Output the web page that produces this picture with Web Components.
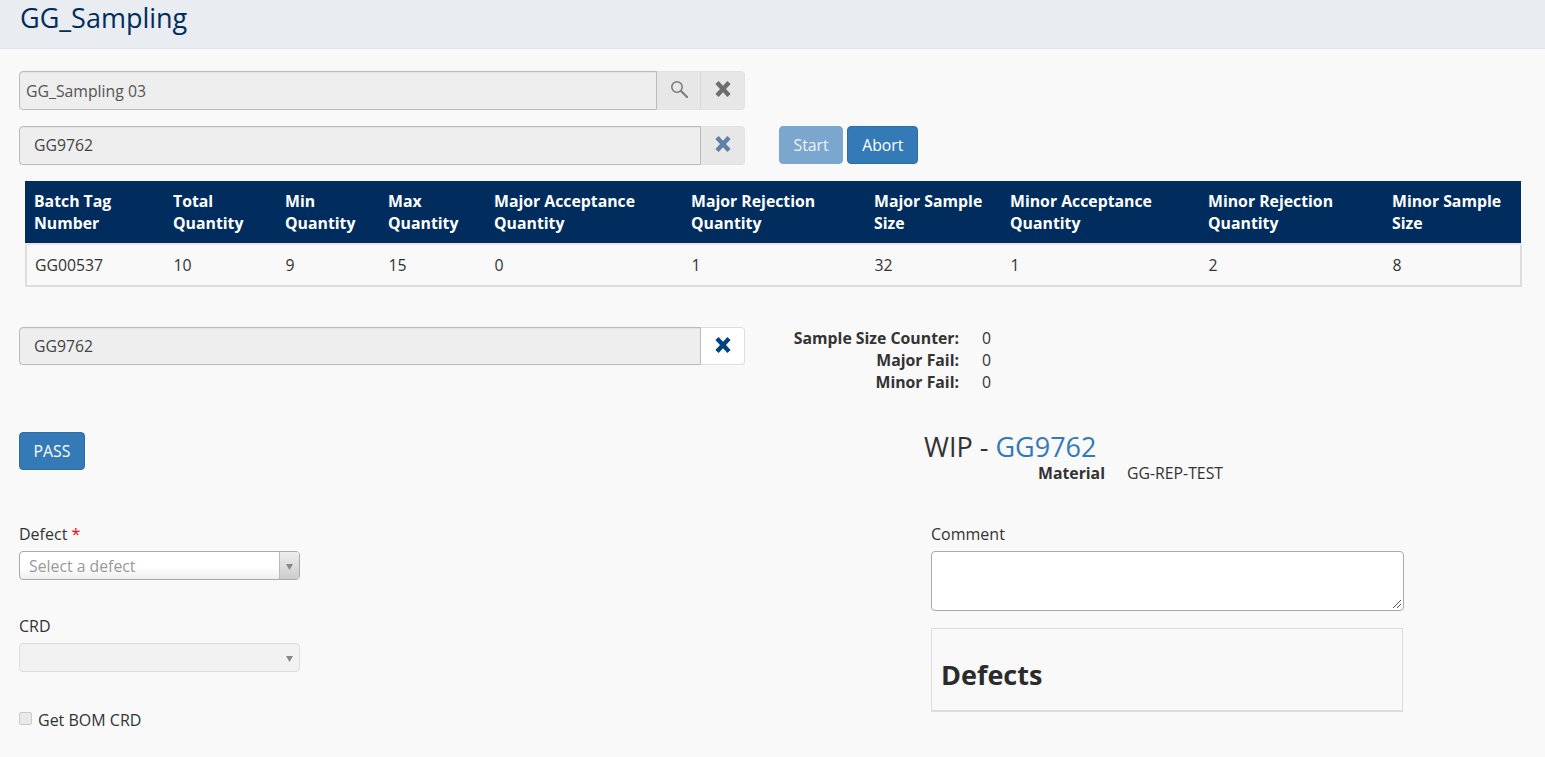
<!DOCTYPE html>
<html><head><meta charset="utf-8"><title>GG_Sampling</title>
<style>
html,body{margin:0;padding:0;height:757px;overflow:hidden;background:#f9f9f9;font:15.8px/22px "Open Sans",sans-serif;color:#333}
gg-app{display:block}
</style></head><body>
<template id="t-header"><style>
:host{display:block;height:48px;background:#e9ecf1;border-bottom:1px solid #e2e5ec;padding-left:20px;color:#002d5d;font-size:27px;line-height:36px}
</style><slot></slot></template>

<template id="t-group"><style>
:host{display:flex;height:39px;box-sizing:border-box;width:726px}
.f{flex:1;min-width:0;background:#eee;border:1px solid #bbb;border-radius:4px 0 0 4px;box-shadow:inset 0 1px 1px rgba(0,0,0,.05);box-sizing:border-box;display:flex;align-items:center;padding-left:var(--pad,6px);padding-bottom:var(--pb,0);color:var(--col,#555)}
</style><div class="f"><slot></slot></div><slot name="btn"></slot></template>

<template id="t-addon"><style>
:host{display:flex;width:44px;box-sizing:border-box;align-items:center;justify-content:center;background:#e7e7e7;border:1px solid #e2e2e2;border-left:0}
:host(.sep){border-right:1px solid #d6d6d6}
:host(.last){border-radius:0 4px 4px 0;border-right-color:#e2e2e2}
:host(.white){background:#fff;border:1px solid #ddd;border-left:0;border-radius:0 4px 4px 0}
::slotted(svg){display:block;margin-bottom:3px}
</style><slot></slot></template>

<template id="t-btn"><style>
:host{display:inline-flex;align-items:center;justify-content:center;box-sizing:border-box;height:38px;background:#337ab7;border:1px solid #2e6da4;border-radius:4px;color:#fff;padding:0 13.5px 1px}
:host([disabled]){background:#7ba6ce;border-color:#7ba6ce;color:#eef3f8}
</style><slot></slot></template>

<template id="t-table"><style>
:host{display:block;margin:16px 0 0 6px;width:1497px}
table{border-collapse:separate;border-spacing:0;width:1497px;table-layout:fixed}
th{background:#002d5d;color:#fff;font-weight:700;text-align:left;padding:9px;height:44px;line-height:22px;vertical-align:top;border-bottom:2px solid #e6e6e6}
th:last-child{border-right:1px solid #f9f9f9}
td{padding:9px 10px 9px 9.4px;height:22px;color:#333;border-bottom:2px solid #ddd}
td:first-child{border-left:2px solid #ddd;padding-left:8px}
td:last-child{border-right:2px solid #ddd}
</style>
<table><colgroup><col style="width:139px"><col style="width:112px"><col style="width:103px"><col style="width:106px"><col style="width:197px"><col style="width:183px"><col style="width:136px"><col style="width:198px"><col style="width:184px"><col></colgroup>
<thead><tr><th>Batch Tag Number</th><th>Total Quantity</th><th>Min Quantity</th><th>Max Quantity</th><th>Major Acceptance Quantity</th><th>Major Rejection Quantity</th><th>Major Sample Size</th><th>Minor Acceptance Quantity</th><th>Minor Rejection Quantity</th><th>Minor Sample Size</th></tr></thead>
<tbody><tr><td>GG00537</td><td>10</td><td>9</td><td>15</td><td>0</td><td>1</td><td>32</td><td>1</td><td>2</td><td>8</td></tr></tbody></table></template>

<template id="t-counters"><style>
:host{display:grid;grid-template-columns:180px auto;column-gap:23px;justify-content:start;margin-left:34px}
b{text-align:right;font-weight:700}
span{color:#333}
</style>
<b>Sample Size Counter:</b><span>0</span><b>Major Fail:</b><span>0</span><b>Minor Fail:</b><span>0</span></template>

<template id="t-field"><style>
:host{display:block}
label{display:block;line-height:22px;height:22px;margin-bottom:6px;color:#333;font-size:16px}
</style><label><slot name="label"></slot></label><slot></slot></template>

<template id="t-select"><style>
:host{display:flex;width:281px;height:29px;box-sizing:border-box;border:1px solid #aaa;border-radius:4px;overflow:hidden;background:linear-gradient(#fff 55%,#eee);color:#999;line-height:29px}
.v{flex:1;padding-left:9px}
.a{border-left:1px solid #bbb;background:linear-gradient(#eee,#ccc);display:flex;align-items:center;justify-content:center;padding-right:1px;box-sizing:border-box;width:20px}
:host([disabled]){background:#f2f2f2;border-color:#ddd}
:host([disabled]) .a{background:none;border-left-color:transparent}
svg{display:block;margin-top:2px}
</style><div class="v"><slot></slot></div><div class="a"><svg width="7" height="6" viewBox="0 0 7 6"><path d="M0 0h7L3.5 6z" fill="#888"/></svg></div></template>

<template id="t-check"><style>
:host{display:flex;align-items:center;gap:6px;color:#333;height:22px;font-size:16px}
.b{width:13px;height:13px;box-sizing:border-box;background:#e9e9e9;border:1px solid #ccc;border-radius:2px;margin-top:-4px}
</style><span class="b"></span><slot></slot></template>

<template id="t-textarea"><style>
:host{display:block;position:relative;width:473px;height:60px;box-sizing:border-box;background:#fff;border:1px solid #aaa;border-radius:4px}
svg{position:absolute;right:1px;bottom:1px}
</style><svg width="10" height="10" viewBox="0 0 10 10"><path d="M9 1L1 9M9 5L5 9" stroke="#555" stroke-width="1" fill="none"/></svg></template>

<template id="t-panel"><style>
:host{display:block;width:472px;height:84px;box-sizing:border-box;border:1px solid #ddd;border-bottom-width:2px;padding:29px 9px 0}
h2{margin:0;font-size:27px;line-height:34px;font-weight:700;color:#2b2b2b}
</style><h2><slot></slot></h2></template>

<template id="t-wip"><style>
:host{display:block;margin-left:-7px;color:#333}
h3{margin:0;font-size:27px;line-height:30px;font-weight:400}
a{color:#337ab7}
.m{display:grid;grid-template-columns:89px auto;margin-left:114px;line-height:22px}
b{font-weight:700}
</style><h3>WIP - <a>GG9762</a></h3><div class="m"><b>Material</b><span>GG-REP-TEST</span></div></template>

<template id="t-app"><style>
:host{display:block}
.main{padding:22px 0 0 19px}
.r{display:flex;margin-top:16px}
.r:first-child{margin-top:0}
.acts{display:flex;gap:4px;margin-left:34px}
.abort{padding:0 14px 1px}
.r3{margin-top:40px;align-items:flex-start}
.cols{display:grid;grid-template-columns:912px 480px;margin-top:39px}
gg-button.pass{display:inline-flex}
.left2{margin-top:53px}
.right2{margin-top:39px}
.gap{height:35px}
.gap2{height:17px}
.chk{margin-top:37px}
</style>
<gg-header>GG_Sampling</gg-header>
<div class="main">
 <div class="r"><gg-group><span>GG_Sampling 03</span>
  <gg-addon slot="btn" class="sep"><svg width="18" height="18" viewBox="0 0 18 18"><circle cx="7" cy="7" r="5.2" fill="none" stroke="#777" stroke-width="1.5"/><path d="M11 11l6 6" stroke="#777" stroke-width="2" stroke-linecap="round"/></svg></gg-addon>
  <gg-addon slot="btn" class="last"><svg width="18" height="16" viewBox="0 0 18 16"><path d="M3 1.5l12 13M15 1.5L3 14.5" stroke="#6e6e6e" stroke-width="4.4"/></svg></gg-addon></gg-group></div>
 <div class="r"><gg-group style="--pad:14px;--col:#444;--pb:1px"><span>GG9762</span>
  <gg-addon slot="btn" class="last"><svg width="18" height="16" viewBox="0 0 18 16"><path d="M3 1.5l12 13M15 1.5L3 14.5" stroke="#5d80a6" stroke-width="4.4"/></svg></gg-addon></gg-group>
  <div class="acts"><gg-button disabled>Start</gg-button><gg-button class="abort">Abort</gg-button></div></div>
 <gg-table></gg-table>
 <div class="r r3"><gg-group style="--pad:14px;--col:#444;height:38px"><span>GG9762</span>
  <gg-addon slot="btn" class="white"><svg width="18" height="16" viewBox="0 0 18 16"><path d="M3 1.5l12 13M15 1.5L3 14.5" stroke="#00437f" stroke-width="4.4"/></svg></gg-addon></gg-group>
  <gg-counters></gg-counters></div>
 <div class="cols">
  <div><gg-button class="pass">PASS</gg-button>
   <div class="left2">
    <gg-field><span slot="label">Defect <span style="color:#f00">*</span></span><gg-select>Select a defect</gg-select></gg-field>
    <div class="gap"></div>
    <gg-field><span slot="label">CRD</span><gg-select disabled></gg-select></gg-field>
    <gg-check class="chk">Get BOM CRD</gg-check>
   </div></div>
  <div><gg-wip></gg-wip>
   <div class="right2"><gg-field><span slot="label">Comment</span><gg-textarea></gg-textarea></gg-field>
    <div class="gap2"></div>
    <gg-panel>Defects</gg-panel></div></div>
 </div>
</div></template>

<gg-app></gg-app>
<script>
const mk=(n,t)=>customElements.define(n,class extends HTMLElement{constructor(){super();this.attachShadow({mode:'open'}).appendChild(document.getElementById(t).content.cloneNode(true));}});
[['gg-header','t-header'],['gg-group','t-group'],['gg-addon','t-addon'],['gg-button','t-btn'],['gg-table','t-table'],['gg-counters','t-counters'],['gg-field','t-field'],['gg-select','t-select'],['gg-check','t-check'],['gg-textarea','t-textarea'],['gg-panel','t-panel'],['gg-wip','t-wip'],['gg-app','t-app']].forEach(a=>mk(a[0],a[1]));
</script>
</body></html>
